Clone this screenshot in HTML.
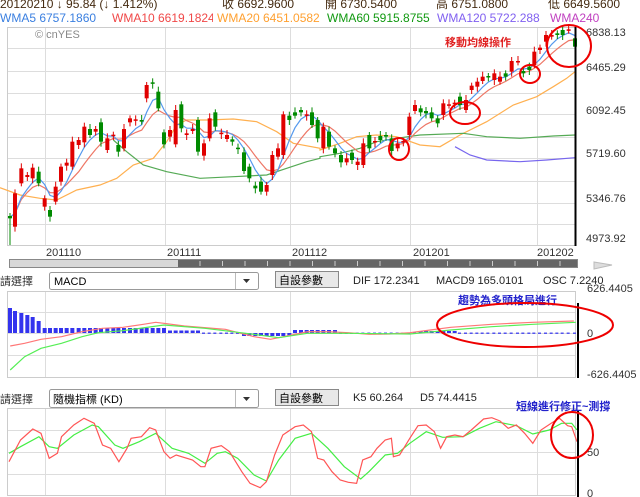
<!DOCTYPE html>
<html><head><meta charset="utf-8">
<style>
html,body{margin:0;padding:0;background:#fff;width:640px;height:497px;overflow:hidden}
svg{display:block}
text{font-family:"Liberation Sans","Noto Sans CJK TC",sans-serif;font-size:11px}
</style></head>
<body>
<svg id="s" width="640" height="497" viewBox="0 0 640 497" xmlns="http://www.w3.org/2000/svg">
<defs>
<clipPath id="c1"><rect x="0" y="10" width="107" height="16"/></clipPath>
<clipPath id="c2"><rect x="109" y="10" width="104" height="16"/></clipPath>
<clipPath id="c3"><rect x="217" y="10" width="106" height="16"/></clipPath>
<clipPath id="c4"><rect x="327" y="10" width="106" height="16"/></clipPath>
<clipPath id="c5"><rect x="437" y="10" width="103" height="16"/></clipPath>
</defs>
<!-- header -->
<g fill="#442a10">
<text x="0" y="8" style="font-size:12px">20120210  ↓ 95.84 (↓ 1.412%)</text>
<text x="222" y="8" style="font-size:12px">收 6692.9600</text>
<text x="325" y="8" style="font-size:12px">開 6730.5400</text>
<text x="436" y="8" style="font-size:12px">高 6751.0800</text>
<text x="548" y="8" style="font-size:12px">低 6649.5600</text>
</g>
<text x="0" y="22" fill="#3a7fe0" style="font-size:12px" clip-path="url(#c1)">WMA5 6757.1860</text>
<text x="112" y="22" fill="#f04848" style="font-size:12px" clip-path="url(#c2)">WMA10 6619.1824</text>
<text x="217" y="22" fill="#ffa030" style="font-size:12px" clip-path="url(#c3)">WMA20 6451.0582</text>
<text x="327" y="22" fill="#119911" style="font-size:12px" clip-path="url(#c4)">WMA60 5915.8755</text>
<text x="437" y="22" fill="#8060f0" style="font-size:12px" clip-path="url(#c5)">WMA120 5722.288</text>
<text x="550" y="22" fill="#c040c0" style="font-size:12px">WMA240</text>

<!-- main frame -->
<rect x="7.5" y="27.5" width="568" height="218" fill="#fff" stroke="#ccc"/>
<g id="grid" stroke="#ddd" stroke-width="1"></g>
<text x="35" y="38" fill="#888" font-size="12">© cnYES</text>
<g id="ma"></g>
<g id="candles"></g>
<line x1="575.5" y1="27" x2="575.5" y2="246" stroke="#000" stroke-width="2"/>
<g fill="#333" font-size="11">
<text x="586" y="36">6838.13</text><text x="586" y="71">6465.29</text><text x="586" y="114">6092.45</text>
<text x="586" y="157">5719.60</text><text x="586" y="202">5346.76</text><text x="586" y="242">4973.92</text>
</g>
<text x="445" y="46" fill="#e02020" font-size="14" font-weight="bold">移動均線操作</text>
<g fill="none" stroke="#e00" stroke-width="2">
<ellipse cx="569" cy="46" rx="22" ry="21"/>
<ellipse cx="399" cy="149" rx="10" ry="11"/>
<ellipse cx="465" cy="113" rx="15" ry="11"/>
<ellipse cx="530" cy="74" rx="10" ry="9"/>
</g>
<g fill="#333"><text x="46" y="256">201110</text><text x="167" y="256">201111</text><text x="292" y="256">201112</text><text x="413" y="256">201201</text><text x="537" y="256">201202</text></g>
<rect x="9.5" y="259.5" width="568" height="8" fill="#d8d8d8" stroke="#888"/>
<rect x="178" y="260" width="399" height="7" fill="#666"/>
<g id="ticks" stroke="#ccc"></g>
<polygon points="594,262 612,265 594,269" fill="#ddd" stroke="#bbb"/>

<text x="0" y="285" fill="#333" font-size="12">請選擇</text>
<rect x="49.5" y="272.5" width="209" height="17" rx="2" fill="#fff" stroke="#999"/>
<line x1="235.5" y1="273" x2="235.5" y2="289" stroke="#bbb"/>
<polygon points="243,279 250,279 246.5,283" fill="#333"/>
<text x="54" y="285" fill="#000">MACD</text>
<rect x="275.5" y="271.5" width="63" height="16" fill="#e8e8e8" stroke="#888"/>
<text x="279" y="284" fill="#000" font-size="12">自設參數</text>
<text x="353" y="284" fill="#222">DIF 172.2341</text><text x="436" y="284" fill="#222">MACD9 165.0101</text><text x="543" y="284" fill="#222">OSC 7.2240</text>

<rect x="7.5" y="291.5" width="568" height="86" fill="#fff" stroke="#ccc"/>
<g id="grid2" stroke="#ddd"></g>
<g id="macd"></g>
<line x1="578" y1="303" x2="578" y2="378" stroke="#000" stroke-width="2"/>
<text x="587" y="292" fill="#333">626.4405</text><text x="587" y="337" fill="#333">0</text><text x="587" y="378" fill="#333">-626.4405</text>
<text x="458" y="304" fill="#2222cc" font-size="13" font-weight="bold">趨勢為多頭格局進行</text>
<ellipse cx="525" cy="325" rx="88" ry="22" fill="none" stroke="#e00" stroke-width="2"/>

<text x="0" y="403" fill="#333" font-size="12">請選擇</text>
<rect x="49.5" y="389.5" width="209" height="18" rx="2" fill="#fff" stroke="#999"/>
<line x1="235.5" y1="390" x2="235.5" y2="407" stroke="#bbb"/>
<polygon points="243,397 250,397 246.5,401" fill="#333"/>
<text x="53" y="403" fill="#000">隨機指標 (KD)</text>
<rect x="275.5" y="389.5" width="63" height="16" fill="#e8e8e8" stroke="#888"/>
<text x="279" y="402" fill="#000" font-size="12">自設參數</text>
<text x="353" y="401" fill="#222">K5 60.264</text><text x="420" y="401" fill="#222">D5 74.4415</text>

<rect x="7.5" y="408.5" width="568" height="87" fill="#fff" stroke="#ccc"/>
<g id="grid3" stroke="#ddd"></g>
<g id="kd"></g>
<line x1="578" y1="410" x2="578" y2="497" stroke="#000" stroke-width="2"/>
<text x="587" y="456" fill="#333">50</text><text x="587" y="497" fill="#333">0</text>
<text x="516" y="410" fill="#2222cc" font-size="13" font-weight="bold">短線進行修正~測撐</text>
<ellipse cx="572" cy="435" rx="21" ry="23" fill="none" stroke="#e00" stroke-width="2"/>
</svg>
<script>
var NS="http://www.w3.org/2000/svg";
function el(p,t,a){var e=document.createElementNS(NS,t);for(var k in a)e.setAttribute(k,a[k]);document.getElementById(p).appendChild(e);return e;}
var vx=[45,165,290,410,537];
[48,71,93,114,137,158,181,203,224].forEach(function(y){el("grid","line",{x1:8,x2:575,y1:y+.5,y2:y+.5});});
vx.forEach(function(x){el("grid","line",{x1:x+.5,x2:x+.5,y1:28,y2:245});el("grid2","line",{x1:x+.5,x2:x+.5,y1:292,y2:377});el("grid3","line",{x1:x+.5,x2:x+.5,y1:409,y2:495});});
[312,333,355].forEach(function(y){el("grid2","line",{x1:8,x2:575,y1:y+.5,y2:y+.5});});
[430,452,474].forEach(function(y){el("grid3","line",{x1:8,x2:575,y1:y+.5,y2:y+.5});});
for(var x=200;x<575;x+=22.5)el("ticks","line",{x1:x,x2:x,y1:261,y2:266});
var A=[[30,573,580,0],[45,505,605,1],[64,430,475,1],[82,450,456,1],[98,428,460,1],[116,440,475,0],[134,520,545,1],[150,555,575,0],[167,485,530,1],[183,425,470,1],[200,413,422,1],[217,350,425,1],[236,345,360,1],[253,305,352,1],[270,312,330,0],[287,312,320,1],[303,292,350,0],[322,340,375,1],[340,329,333,1],[355,360,380,0],[372,312,370,1],[390,280,292,1],[407,283,287,1],[425,285,290,0],[440,180,220,1],[458,172,176,0],[475,200,250,0],[492,322,358,0],[510,315,335,1],[527,255,358,1],[544,238,310,0],[560,325,330,1],[578,312,318,1],[594,285,380,0],[612,355,392,1],[629,280,340,1],[646,262,305,0],[664,323,327,1],[681,330,342,1],[697,343,350,0],[714,368,372,0],[732,382,438,0],[748,425,460,0],[766,482,490,0],[783,470,500,0],[800,480,500,1],[817,390,450,1],[834,370,395,1],[850,268,390,1],[868,272,285,0],[885,262,272,0],[903,255,262,0],[920,268,272,1],[936,262,300,0],[953,285,340,0]];
var B=[[10,305,370,1],[27,320,365,0],[45,370,385,0],[63,390,412,0],[80,400,412,1],[96,383,405,0],[113,410,420,1],[130,355,420,1],[148,330,370,0],[165,348,352,1],[181,333,345,0],[198,330,335,0],[215,340,378,0],[233,355,370,1],[250,348,352,1],[268,275,330,1],[285,240,258,1],[302,250,262,0],[318,258,265,0],[335,262,280,0],[353,280,295,0],[370,235,270,1],[387,238,242,1],[404,233,237,1],[420,215,240,0],[438,225,255,1],[455,182,195,1],[472,170,185,1],[488,155,168,1],[505,153,157,0],[523,145,165,1],[540,155,170,1],[557,145,155,0],[575,108,140,1],[594,108,112,1],[610,138,145,0],[628,125,135,0],[643,80,120,1],[660,68,75,1],[678,30,50,1],[695,30,35,1],[712,25,30,0],[728,15,30,0],[746,13,17,1],[765,40,65,0]];
var C=[];
A.forEach(function(a){C.push([a[0]/3,25+a[1]/3,25+a[2]/3,a[3]]);});
B.forEach(function(a){C.push([320+a[0]/3,25+a[1]/3,25+a[2]/3,a[3]]);});
C.forEach(function(c,i){var col=c[3]?"#e00000":"#008a00";var wt=c[1]-3-(i%3),wb=c[2]+3+((i+1)%3);if(i==0)wb=245;
el("candles","line",{x1:c[0],x2:c[0],y1:wt,y2:wb,stroke:col,"stroke-width":1});
el("candles","rect",{x:c[0]-2,y:c[1],width:4,height:Math.max(1.5,c[2]-c[1]),fill:col});});
function wma(n){var r=[];for(var i=0;i<C.length;i++){var s=0,w=0;for(var j=0;j<n&&i-j>=0;j++){var ww=n-j;s+=ww*(C[i-j][1]+C[i-j][2])/2;w+=ww;}r.push([C[i][0],s/w]);}return r;}
function pl(p,pts,col,sw){el(p,"polyline",{points:pts.map(function(q){return q[0].toFixed(1)+","+q[1].toFixed(1)}).join(" "),fill:"none",stroke:col,"stroke-width":sw||1.2});}
function cv(arr,ox,oy,sx,sy){return arr.map(function(q){return [ox+q[0]/sx,oy+q[1]/sy];});}
pl("ma",cv([[0,488],[60,510],[120,520],[170,525],[230,495],[300,480],[350,460],[400,420],[460,400],[500,350],[530,300],[560,285],[620,285],[700,282],[770,290],[830,320],[880,355],[960,370]],0,25,3,3).concat(cv([[0,375],[60,355],[110,335],[170,330],[230,335],[300,360],[360,365],[420,330],[500,290],[580,240],[650,215],[700,185],[740,160],[765,140]],320,25,3,3)),"#ffb050");
pl("ma",cv([[340,345],[380,380],[430,420],[500,440],[600,460],[700,455],[800,450],[860,430],[920,410],[960,400]],0,25,3,3).concat(cv([[0,395],[60,385],[120,370],[170,350],[230,340],[300,330],[430,325],[500,335],[600,340],[700,333],[765,330]],320,25,3,3)),"#55aa55");
pl("ma",cv([[405,365],[450,390],[500,405],[600,410],[680,405],[765,398]],320,25,3,3),"#7766ee");
pl("ma",wma(10),"#ee7766");
pl("ma",wma(5),"#5599ee");
C.forEach(function(c,i){var x=c[0],h=0;
 if(i<6)h=[25,22,20,18,16,12][i];else if(i<28)h=5;else if(i<34)h=2.5;
 else if(i>=41&&i<=49)h=-3;else if(i>=50&&i<=57)h=3;else if(i>=72&&i<=78)h=2;
 if(h>0)el("macd","rect",{x:x-2,y:333-h,width:4,height:h,fill:"#3333ee"});
 else if(h<0)el("macd","rect",{x:x-2,y:333,width:4,height:-h,fill:"#3333ee"});
 else el("macd","rect",{x:x-2,y:332.5,width:3,height:1.5,fill:"#5555ee"});});
pl("macd",cv([[25,168],[60,160],[100,148],[150,140],[200,125],[250,115],[300,112],[350,103],[380,97],[400,100],[450,108],[550,118],[620,140],[660,148],[700,138],[750,125],[800,125],[850,128],[900,133],[950,132],[1000,128],[1050,120],[1100,112],[1200,103],[1300,97],[1400,93]],0,290,2.44,3),"#ff7777");
pl("macd",cv([[25,240],[60,200],[100,175],[150,160],[200,140],[240,128],[300,122],[400,105],[500,115],[600,130],[680,143],[750,130],[850,130],[1000,132],[1100,120],[1200,110],[1300,103],[1405,97]],0,290,2.44,3),"#55ee55");
pl("kd",cv([[22,145],[50,125],[95,95],[120,125],[140,130],[180,90],[225,60],[240,65],[280,120],[300,130],[340,110],[380,85],[420,130],[460,145],[500,175],[530,145],[550,140],[580,160],[620,210],[650,228],[680,165],[720,100],[760,85],[800,130],[840,185],[880,222],[900,200],[940,150],[970,145],[1000,115],[1040,80],[1080,97],[1130,95],[1170,70],[1210,50],[1260,62],[1300,87],[1340,75],[1370,55],[1395,55],[1408,75]],0,405,2.44,3),"#44ee44");
pl("kd",cv([[22,170],[50,105],[80,72],[100,85],[120,160],[140,145],[150,95],[180,60],[205,40],[230,55],[250,120],[270,130],[290,170],[310,130],[320,100],[345,95],[365,68],[380,75],[400,140],[415,160],[430,150],[470,165],[490,185],[500,185],[515,130],[540,122],[560,140],[590,200],[610,235],[635,248],[650,230],[670,150],[690,90],[720,65],[740,60],[760,80],[775,160],[790,165],[810,200],[830,225],[850,232],[870,235],[885,165],[905,155],[920,130],[940,105],[955,100],[960,155],[975,150],[1000,100],[1020,62],[1040,60],[1060,80],[1075,130],[1090,95],[1110,90],[1130,95],[1150,75],[1180,42],[1200,38],[1220,48],[1240,70],[1260,60],[1280,85],[1300,115],[1320,75],[1345,55],[1365,40],[1385,62],[1395,65],[1408,110]],0,405,2.44,3),"#ff5555");
</script>
</body></html>
